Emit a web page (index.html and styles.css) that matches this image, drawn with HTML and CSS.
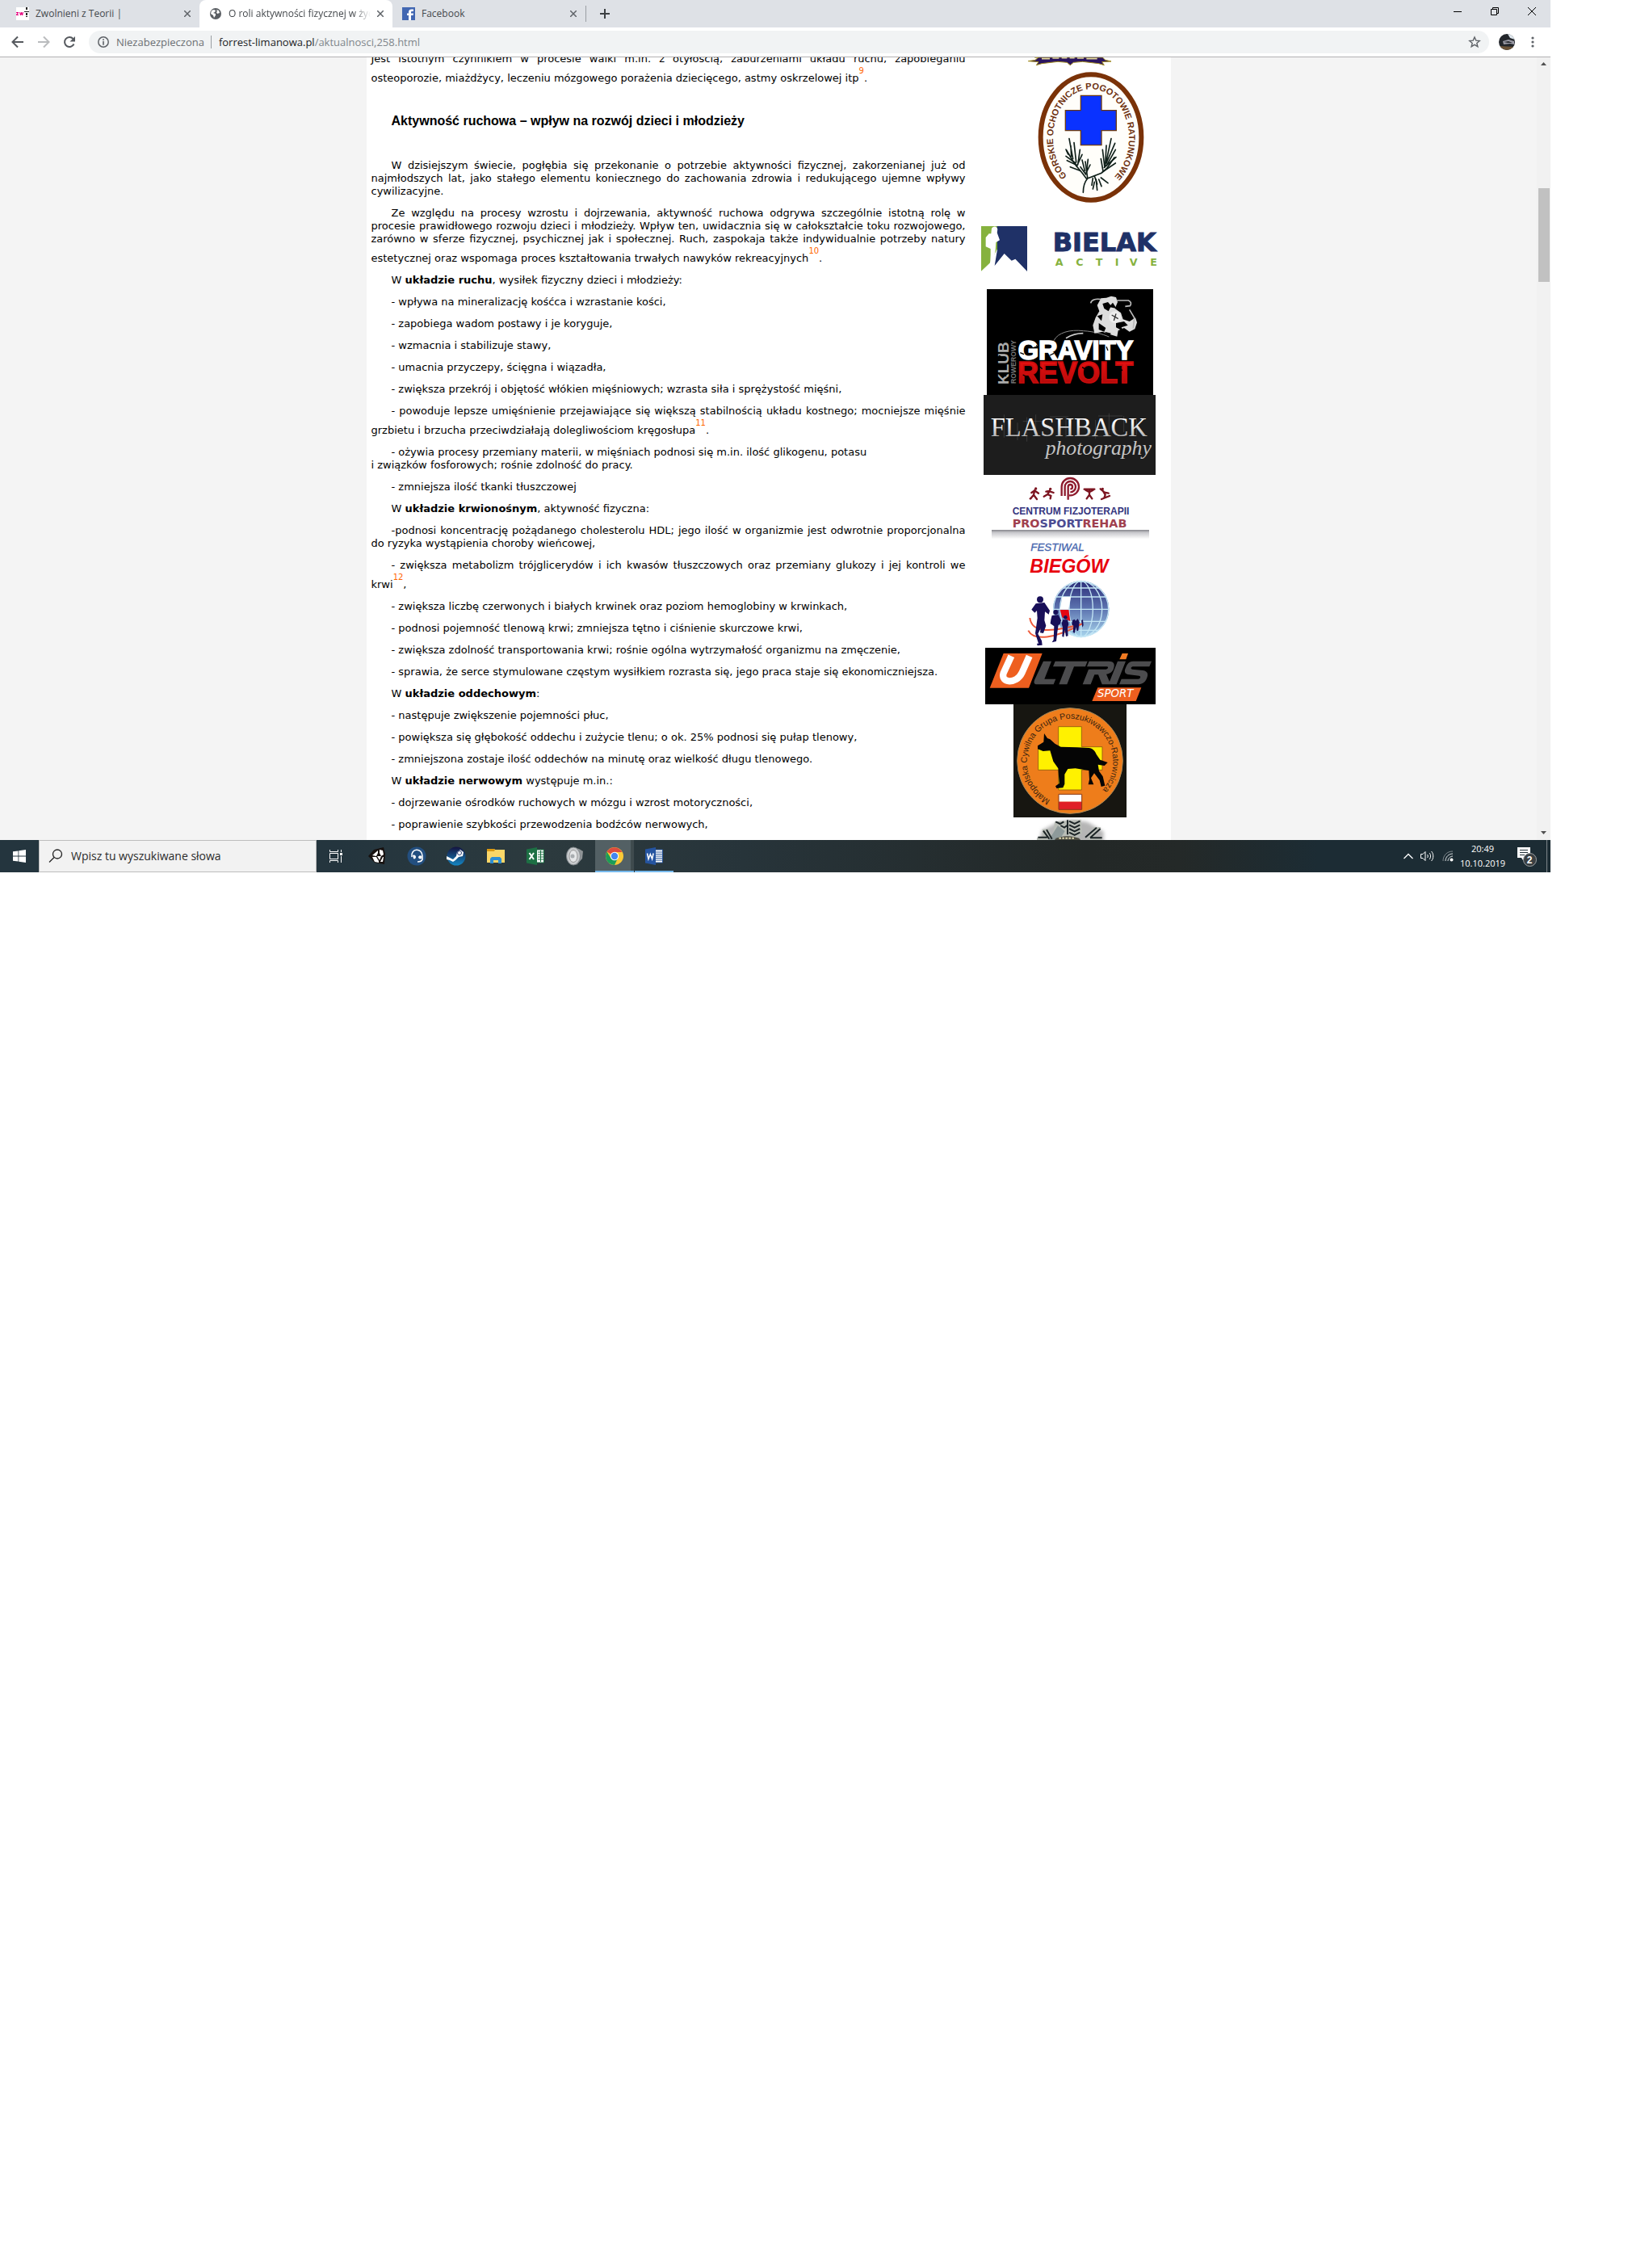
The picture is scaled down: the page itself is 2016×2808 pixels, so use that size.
FILE: index.html
```html
<!DOCTYPE html>
<html lang="pl">
<head>
<meta charset="utf-8">
<title>O roli aktywności fizycznej w życiu</title>
<link rel="stylesheet" href="styles.css">
</head>
<body>
<div class="desktop">
  <header class="tabstrip">
    <div class="tab">
      <svg class="fav" viewBox="0 0 16 16"><rect width="16" height="16" fill="#fff"/><path d="M0 6h3v1L1.500 9H3v1H0V9l1.500-2H0zM4 6h1l.5 2L6 6h1l.5 2L8 6h1l-.8 4H7l-.5-1.500L6 10H5z" fill="#e6007e"/><path d="M12 0h2v3h-2zM10 5h6v1h-6zM12 7h2v3h-2zM12 11h2v1h-2z" fill="#222"/></svg>
      <span class="tab-title">Zwolnieni z Teorii |</span>
      <button class="icon-btn" aria-label="Zamknij kartę"><svg width="8" height="8" viewBox="0 0 8 8"><path d="M0 0l8 8M8 0L0 8" stroke="#5f6368" stroke-width="1.500"/></svg></button>
    </div>
    <div class="tab active">
      <svg class="fav" viewBox="0 0 16 16"><circle cx="8" cy="8" r="7" fill="#5a5e63"/><path d="M3 4l3-1 2 1-1 2-2 1 3 1v2l-2 3-1-3-3-2zM9 3l3 1 1 3-3 1-1-2 1-1z" fill="#fff"/></svg>
      <span class="tab-title">O roli aktywności fizycznej w życiu</span>
      <button class="icon-btn" aria-label="Zamknij kartę"><svg width="8" height="8" viewBox="0 0 8 8"><path d="M0 0l8 8M8 0L0 8" stroke="#5f6368" stroke-width="1.500"/></svg></button>
    </div>
    <div class="tab">
      <svg class="fav" viewBox="0 0 16 16"><rect width="16" height="16" fill="#4267b2"/><path d="M8 16V10H6V7.500h2V6c0-2.500 1.500-3.500 3.500-3.500H14V5h-1.500C11.500 5 11 5.300 11 6v1.500h3L13.500 10H11v6z" fill="#fff"/></svg>
      <span class="tab-title">Facebook</span>
      <button class="icon-btn" aria-label="Zamknij kartę"><svg width="8" height="8" viewBox="0 0 8 8"><path d="M0 0l8 8M8 0L0 8" stroke="#5f6368" stroke-width="1.500"/></svg></button>
    </div>
    <button class="icon-btn new-tab" aria-label="Nowa karta"><svg width="12" height="12" viewBox="0 0 12 12"><path d="M6 0v12M0 6h12" stroke="#3c4043" stroke-width="2"/></svg></button>
    <div class="window-controls">
      <button class="icon-btn" aria-label="Minimalizuj"><svg width="10" height="10" viewBox="0 0 10 10"><path d="M0 5.500h10" stroke="#000"/></svg></button>
      <button class="icon-btn" aria-label="Przywróć"><svg width="10" height="10" viewBox="0 0 10 10"><path d="M.5 2.500h7v7h-7zM2.500 2V.5h7v7H8" fill="none" stroke="#000"/></svg></button>
      <button class="icon-btn" aria-label="Zamknij"><svg width="10" height="10" viewBox="0 0 10 10"><path d="M0 0l10 10M10 0L0 10" stroke="#000"/></svg></button>
    </div>
  </header>

  <nav class="toolbar">
    <button class="icon-btn" aria-label="Wstecz"><svg width="16" height="16" viewBox="0 0 16 16"><path d="M15 8H2M8 1.500L1.500 8 8 14.500" fill="none" stroke="#55595e" stroke-width="2"/></svg></button>
    <button class="icon-btn" aria-label="Dalej"><svg width="16" height="16" viewBox="0 0 16 16"><path d="M1 8h13M8 1.500L14.500 8 8 14.500" fill="none" stroke="#babcbe" stroke-width="2"/></svg></button>
    <button class="icon-btn" aria-label="Odśwież"><svg width="16" height="16" viewBox="0 0 16 16"><path d="M13.500 10.500A6 6 0 1 1 12.500 4" fill="none" stroke="#55595e" stroke-width="2"/><path d="M15 1v6.500H8.500z" fill="#55595e"/></svg></button>
    <div class="omnibox">
      <svg width="14" height="14" viewBox="0 0 14 14"><circle cx="7" cy="7" r="6.200" fill="none" stroke="#5f6368" stroke-width="1.500"/><path d="M6.200 3.300h1.600v1.600H6.200zM6.200 6h1.600v4.700H6.200z" fill="#5f6368"/></svg>
      <span class="security">Niezabezpieczona</span>
      <a class="url" href="#">forrest-limanowa.pl<span>/aktualnosci,258.html</span></a>
      <button class="icon-btn star" aria-label="Dodaj do zakładek"><svg width="16" height="16" viewBox="0 0 16 16"><path d="M8 2l1.800 4.100 4.400.4-3.400 2.900 1.100 4.300L8 11.400l-3.900 2.300 1.100-4.300L1.800 6.500l4.400-.4z" fill="none" stroke="#5f6368" stroke-width="1.400"/></svg></button>
    </div>
    <svg class="avatar" viewBox="0 0 20 20"><defs><clipPath id="av"><circle cx="10" cy="10" r="10"/></clipPath></defs><g clip-path="url(#av)"><rect width="20" height="20" fill="#23262b"/><path d="M11 0h9v7l-6-2z" fill="#dfe7ee"/><path d="M5 9l7-2 7 2v4l-5-1-8 1z" fill="#9b9ba6"/><path d="M6 10l6-1 5 2-6 0z" fill="#23262b"/><path d="M0 15l20 1v4H0z" fill="#6a5236"/></g></svg>
    <button class="icon-btn menu" aria-label="Menu"><svg width="4" height="14" viewBox="0 0 4 14"><g fill="#5f6368"><circle cx="2" cy="2" r="1.600"/><circle cx="2" cy="7" r="1.600"/><circle cx="2" cy="12" r="1.600"/></g></svg></button>
  </nav>

  <div class="viewport">
    <div class="site">
      <main class="page">
        <article class="article">
          <p class="continued">Jest istotnym czynnikiem w procesie walki m.in. z otyłością, zaburzeniami układu ruchu, zapobieganiu osteoporozie, miażdżycy, leczeniu mózgowego porażenia dziecięcego, astmy oskrzelowej itp<a class="note" href="#">9</a>.</p>
          <h2>Aktywność ruchowa – wpływ na rozwój dzieci i młodzieży</h2>
          <p>W dzisiejszym świecie, pogłębia się przekonanie o potrzebie aktywności fizycznej, zakorzenianej już od najmłodszych lat, jako stałego elementu koniecznego do zachowania zdrowia i redukującego ujemne wpływy cywilizacyjne.</p>
          <p>Ze względu na procesy wzrostu i dojrzewania, aktywność ruchowa odgrywa szczególnie istotną rolę w procesie prawidłowego rozwoju dzieci i młodzieży. Wpływ ten, uwidacznia się w całokształcie toku rozwojowego, zarówno w sferze fizycznej, psychicznej jak i społecznej. Ruch, zaspokaja także indywidualnie potrzeby natury estetycznej oraz wspomaga proces kształtowania trwałych nawyków rekreacyjnych<a class="note" href="#">10</a>.</p>
          <p>W <strong>układzie ruchu</strong>, wysiłek fizyczny dzieci i młodzieży:</p>
          <p>- wpływa na mineralizację kośćca i wzrastanie kości,</p>
          <p>- zapobiega wadom postawy i je koryguje,</p>
          <p>- wzmacnia i stabilizuje stawy,</p>
          <p>- umacnia przyczepy, ścięgna i wiązadła,</p>
          <p>- zwiększa przekrój i objętość włókien mięśniowych; wzrasta siła i sprężystość mięśni,</p>
          <p>- powoduje lepsze umięśnienie przejawiające się większą stabilnością układu kostnego; mocniejsze mięśnie grzbietu i brzucha przeciwdziałają dolegliwościom kręgosłupa<a class="note" href="#">11</a>.</p>
          <p>- ożywia procesy przemiany materii, w mięśniach podnosi się m.in. ilość glikogenu, potasu<br>i związków fosforowych; rośnie zdolność do pracy.</p>
          <p>- zmniejsza ilość tkanki tłuszczowej</p>
          <p>W <strong>układzie krwionośnym</strong>, aktywność fizyczna:</p>
          <p>-podnosi koncentrację pożądanego cholesterolu HDL; jego ilość w organizmie jest odwrotnie proporcjonalna do ryzyka wystąpienia choroby wieńcowej,</p>
          <p>- zwiększa metabolizm trójglicerydów i ich kwasów tłuszczowych oraz przemiany glukozy i jej kontroli we krwi<a class="note" href="#">12</a>,</p>
          <p>- zwiększa liczbę czerwonych i białych krwinek oraz poziom hemoglobiny w krwinkach,</p>
          <p>- podnosi pojemność tlenową krwi; zmniejsza tętno i ciśnienie skurczowe krwi,</p>
          <p>- zwiększa zdolność transportowania krwi; rośnie ogólna wytrzymałość organizmu na zmęczenie,</p>
          <p>- sprawia, że serce stymulowane częstym wysiłkiem rozrasta się, jego praca staje się ekonomiczniejsza.</p>
          <p>W <strong>układzie oddechowym</strong>:</p>
          <p>- następuje zwiększenie pojemności płuc,</p>
          <p>- powiększa się głębokość oddechu i zużycie tlenu; o ok. 25% podnosi się pułap tlenowy,</p>
          <p>- zmniejszona zostaje ilość oddechów na minutę oraz wielkość długu tlenowego.</p>
          <p>W <strong>układzie nerwowym</strong> występuje m.in.:</p>
          <p>- dojrzewanie ośrodków ruchowych w mózgu i wzrost motoryczności,</p>
          <p>- poprawienie szybkości przewodzenia bodźców nerwowych,</p>
        </article>

        <aside class="partners">
          <!-- ribbon of a club crest -->
          <svg viewBox="0 33 750 33"><path d="M244 33h14l-12 10-26 4 38 3-8 12 20-6 60-7 34 3 12 10 12-10 34-3 60 7 20 6-8-12 34-2-22-5-10-10z" fill="#2b1560" stroke="#a08a1c" stroke-width="3"/><path d="M270 38h30M310 36h24M344 35h20M374 35h18M402 36h24M436 38h40" stroke="#e6dca0" stroke-width="5"/></svg>
          <!-- GOPR -->
          <svg viewBox="0 66 750 549">
            <ellipse cx="453" cy="330" rx="187" ry="233" fill="#fffefa" stroke="#7a3208" stroke-width="18"/>
            <path id="gopr-arc" d="M364 474A141 182 0 1 1 542 474" fill="none"/>
            <text class="gopr-text"><textPath href="#gopr-arc">GORSKIE OCHOTNICZE POGOTOWIE RATUNKOWE</textPath></text>
            <path d="M415 175h77v55h55v75h-55v54h-77v-54h-57v-75h57z" fill="#0a32ff" stroke="#6b3a12" stroke-width="4"/>
            <g fill="none" stroke="#10201a" stroke-linecap="round">
              <path d="M424 535c0-25 6-40 16-52l52-20 20-18 28-40M438 486l-18-24-28-34-30-50M466 474l10 30M440 480l-8-60" stroke-width="5"/>
              <path d="M360 375l8 18M378 362l2 38M372 335l14 75M390 350l8 72M412 376l-8 56M360 400l36 26M364 416l38 18M420 394l-20 44M376 440l36 14M528 335l-18 84M542 352l-32 74M544 376l-34 60M546 404l-44 38M510 360l-4 76M496 376l8 66M490 410l8 46M544 426l-50 34M420 414l10 40M442 412l-6 50M450 432l-16 32M414 440l20 28M460 482l-4 26M472 486l4 40M482 486l10 26M490 480l26 20M466 496l-6 26" stroke-width="5"/>
            </g>
          </svg>
          <!-- Bielak Active -->
          <svg viewBox="0 615 750 279">
            <path d="M45 660h60v85l-28 52-32 30z" fill="#86b23e"/>
            <path d="M104 660h112v168l-44-46-14 6-27-26-36 45 10-60z" fill="#1f3167"/>
            <path d="M84 668c8-10 20-8 22 4l-2 12 10 28-14 8-2 30-6 30-2 8-12 18 2-40 0-22-18-8 0-34 12-14 8 0z" fill="#fff"/>
            <text class="bielak" x="311" y="752">BIELAK</text>
            <text class="active-word" y="808" x="320 397 470 542 596 673">ACTIVE</text>
          </svg>
          <!-- Gravity Revolt -->
          <svg viewBox="0 54 750 393">
            <defs><linearGradient id="rev" x1="0" y1="0" x2="0" y2="1"><stop offset="0" stop-color="#f21212"/><stop offset="1" stop-color="#a50808"/></linearGradient></defs>
            <rect x="66" y="54" width="618" height="393" fill="#000"/>
            <path d="M315 245c15-30 60-42 110-36 40 2 70 12 95 22" fill="none" stroke="#8a8a8a" stroke-width="3"/>
            <path d="M360 236c20-12 44-18 64-18" fill="none" stroke="#ccc" stroke-width="5"/>
            <path d="M490 88l20-2 18-6 18 4 6 18-10 24 22 16 8 24 24 8 22-14 6 18-8 24-20 10-20-14-22 10-4 22-34-10-20-8-30 6-6-30 10-28 14-24-8-22z" fill="#ddd"/>
            <path d="M490 92c-20-4-36 2-38 14M548 96l44 0c10 4 12 12 6 20l-18 2M596 130l18 30-4 40" fill="none" stroke="#bbb" stroke-width="5"/>
            <path d="M496 108l20-6 12 14-10 20-16-10zM546 180l30-6 14 14-24 8 10 16-30-16zM482 180l26 18-6 14-20-8zM520 120l14-16 14 22zM476 154l20-6-4 24zM504 212l24 6-10 10z" fill="#000"/>
            <circle cx="542" cy="158" r="22" fill="#eee"/><path d="M530 150l24 14M546 145l-8 26" stroke="#333" stroke-width="4"/>
            <text class="gravity" x="182" y="314">GRAVITY</text>
            <text class="revolt" x="180" y="403" fill="url(#rev)">REVOLT</text>
            <text class="klub" transform="translate(146 408) rotate(-90)">KLUB</text>
            <text class="rowerowy" transform="translate(173 405) rotate(-90)">ROWEROWY</text>
            <path d="M190 290l14 6M250 262l10 12M300 300l16-8M360 268l8 16M440 300l14-10M510 268l6 14M590 296l10 6M200 372l16 8M260 340l12 10M330 390l10-12M420 344l14 8M480 384l12 6M560 350l10 6M110 300l12 6M130 370l8 8" stroke="#000" stroke-width="4"/>
          </svg>
          <!-- Flashback photography -->
          <svg viewBox="0 447 750 297">
            <defs><linearGradient id="silver" x1="0" y1="0" x2="0" y2="1"><stop offset="0.300" stop-color="#fff"/><stop offset="1" stop-color="#999"/></linearGradient></defs>
            <rect x="54" y="447" width="639" height="297" fill="#1d1d1d"/>
            <path d="M130 520v85M180 550v65M215 530v90M248 520v80M300 528h70M360 530v75M470 540v70M520 515v80M575 525v60M622 535v60M200 545h80M480 525h90M440 600h90" stroke="#4a4a4a" stroke-width="2"/>
            <text class="flashback" x="80" y="600" fill="url(#silver)">FLASHBACK</text>
            <text class="photography" x="284" y="670">photography</text>
          </svg>
          <!-- Prosportrehab -->
          <svg viewBox="0 744 750 204">
            <g fill="none" stroke="#8e1b2d" stroke-width="7"><path d="M344 822v-34a32 32 0 1 1 32 32h-4"/><path d="M356 822v-34a20 20 0 1 1 20 20"/><path d="M368 836v-48a8 8 0 1 1 8 8"/></g>
            <g fill="none" stroke="#7c1420" stroke-width="7" stroke-linecap="round"><path d="M244 800l-4 18 12 16M240 818l-10 12M246 804l12 8M244 802l-12 8M300 802l-8 14 12 6-2 10M292 816l-14 8M298 804l-12 2M302 806l12 4M447 806v12l-10 14M447 818l10 14M447 808l-14-8M447 808l14-8M428 797h38M498 804l8 14-4 12M500 808l18 4M488 796l12 10M492 834l30-12"/></g>
            <g fill="#7c1420"><circle cx="248" cy="795" r="5"/><circle cx="302" cy="796" r="5"/><circle cx="447" cy="800" r="5"/><circle cx="496" cy="796" r="5"/><circle cx="228" cy="832" r="4"/></g>
            <text class="centrum" x="161" y="890">CENTRUM FIZJOTERAPII</text>
            <text class="prosport" x="161" y="938"><tspan>PRO</tspan><tspan class="blue">SPORT</tspan><tspan>REHAB</tspan></text>
          </svg>
          <!-- Festiwal Biegów -->
          <svg viewBox="0 18 750 438">
            <defs>
              <linearGradient id="fade" x1="0" y1="0" x2="0" y2="1"><stop offset="0" stop-color="#85858b"/><stop offset="0.300" stop-color="#c8c8cc"/><stop offset="1" stop-color="#fff"/></linearGradient>
              <linearGradient id="globe" x1="0" y1="0" x2="0" y2="1"><stop offset="0" stop-color="#2b2d78"/><stop offset="0.500" stop-color="#5d74b0"/><stop offset="1" stop-color="#a9d6ee"/></linearGradient>
            </defs>
            <rect x="84" y="18" width="585" height="34" fill="url(#fade)"/>
            <text class="festiwal" x="229" y="95">FESTIWAL</text>
            <text class="biegow" x="226" y="178">BIEGÓW</text>
            <circle cx="416" cy="312" r="104" fill="url(#globe)"/>
            <g fill="none" stroke="#c4e6f5" stroke-width="4"><circle cx="416" cy="312" r="102"/><path d="M416 208v208M312 313h208M324 267h184M324 358h184M350 234h132M350 391h132"/><ellipse cx="416" cy="312" rx="44" ry="104"/><ellipse cx="416" cy="312" rx="78" ry="104"/></g>
            <path d="M346 267h32l-8 46h-32z" fill="#fff"/><path d="M338 315h32l6 42-30-14z" fill="#e30613"/>
            <path d="M226 345c6 50 60 60 196 22M220 392c20 40 100 30 198-24" fill="none" stroke="#ee5a3a" stroke-width="6"/>
            <g fill="#180f58"><circle cx="264" cy="277" r="12"/><path d="M248 292l32-4 20 30-4 14-14-10-2 32 6 20-10 28-12-2 2-16-10 20 14 26 2 16-18 2-2-8 6 0-12-38 8-56-2-28-8 8-12-12z"/><circle cx="322" cy="324" r="9"/><path d="M308 336l24-2 10 20-4 14-6 4-4 26-4 34-16 4 6-10 2-50-14-10 2-14z"/><circle cx="358" cy="343" r="7"/><path d="M348 352l18 0 4 16-4 14 2 30-8 2-4-24-4 26-6-2 2-34-4-14z"/><path d="M384 354l8-4 4 6 8-8 6 12-4 32-6 2-2-16-6 24-6-4 2-24-6-4zM417 354l6-2 2 20-4 8z"/></g>
          </svg>
          <!-- Ultris Sport -->
          <svg viewBox="0 456 750 210">
            <rect x="60" y="456" width="633" height="210" fill="#000"/>
            <path d="M128 477h144l-50 128H77z" fill="#ee5f1f"/>
            <path d="M157 487L128 550C116 588 176 592 196 550L224 487" fill="none" stroke="#fff" stroke-width="25"/>
            <path d="M276 506h30l-26 66h42l-8 20h-62c-12 0-12-8-8-18zM320 506h120l-8 20h-42l-26 66h-30l26-66h-48zM446 506h72c24 0 24 14 18 30-6 12-14 16-26 18l16 38h-32l-14-36h-14l-14 36h-30l22-56h64c8 0 12-10 4-10h-74zM552 506h30l-34 86h-30zM606 506h72l-8 20h-60c-8 0-12 8-4 10l40 4c20 4 20 16 14 30-6 16-20 22-36 22h-66l8-20h62c8 0 12-10 4-12l-36-4c-20-2-20-14-14-26 6-16 14-24 28-24z" fill="#4c4c4e"/>
            <path d="M569 477h22l-8 22h-24z" fill="#f07a22"/>
            <path d="M478 604h162l-20 50H457z" fill="#ee5f1f"/>
            <text class="sport" x="477" y="639">SPORT</text>
          </svg>
          <!-- rescue dog group -->
          <svg viewBox="0 666 750 420">
            <rect x="165" y="666" width="420" height="420" fill="#171611"/>
            <circle cx="375" cy="876" r="196" fill="#ee7d1b" stroke="#a98a5a" stroke-width="3"/>
            <path id="dog-arc" d="M302 1022A160 160 0 1 1 448 1022" fill="none"/>
            <text class="dog-text"><textPath href="#dog-arc">Małopolska Cywilna Grupa Poszukiwawczo-Ratownicza</textPath></text>
            <path d="M332 749h86v75h77v86h-77v74h-86v-74h-75v-86h75z" fill="#fff100" stroke="#a0640e" stroke-width="3"/>
            <path d="M279 774l12 18 10 4 18 16 22 12 60 2 44 2c14 2 22 10 28 24l14 20 28 10-12 12-24-4 4 24 14 20 8 34-14 4-6-24-20-26-12 18 10 24-20 0 4-18-2-34-50-8-28 2-12 20 0 36-6 14-24 2-4-8 14-10-4-56-18-26-12-40-26 2-20-8 0-12 22-14z" fill="#050505"/>
            <path d="M333 1000h86v28h-86z" fill="#fff"/><path d="M333 1028h86v29h-86z" fill="#e01f26"/><path d="M333 1000h86v57h-86z" fill="none" stroke="#8a3a18" stroke-width="3"/>
          </svg>
          <!-- police badge -->
          <svg viewBox="0 1086 750 84">
            <defs><filter id="soft"><feGaussianBlur stdDeviation="7"/></filter></defs>
            <path d="M270 1135l60-32 50-8 60 8 60 36v40H260z" fill="#b5b5b5" filter="url(#soft)"/>
            <path d="M318 1102l98-8 4 50-30 26h-80zM272 1130l24-2 20 42h-40zM252 1162h40v8h-40zM462 1122l28 0-30 48h-20zM450 1158l42 4v8h-42z" fill="#b9bdb6"/>
            <path d="M330 1117l26 20-20 33h-40z" fill="#8e9a9a"/>
            <g fill="none" stroke="#1c2426" stroke-width="6"><path d="M322 1102l16 8 14-8M340 1116l14 8 10-8M372 1100l20 10 20-10M372 1114l20 10 20-10M372 1128l20 10 20-10M372 1142l20 10 20-10M366 1096v54M276 1136l22 30M288 1132l20 34M256 1160h34M488 1128l-38 34M474 1124l-42 36M450 1162h44"/></g>
            <path d="M320 1166c20-14 70-14 92 0l4 10H316z" fill="#4a4a40"/><path d="M334 1163h60" stroke="#ddd6ae" stroke-width="6" stroke-dasharray="8 4"/>
          </svg>
        </aside>
      </main>
    </div>
    <div class="scrollbar">
      <svg width="17" height="17" viewBox="0 0 17 17"><path d="M5 10l3.500-4 3.500 4z" fill="#505050"/></svg>
      <div class="track"><div class="thumb"></div></div>
      <svg width="17" height="17" viewBox="0 0 17 17"><path d="M5 6l3.500 4L12 6z" fill="#505050"/></svg>
    </div>
  </div>

  <footer class="taskbar">
    <button class="icon-btn start" aria-label="Start"><svg width="16" height="16" viewBox="0 0 16 16"><path d="M0 2.300L6.500 1.400V7.600H0zM7.300 1.300L16 0v7.600H7.300zM0 8.400h6.500v6.200L0 13.700zM7.300 8.400H16V16l-8.700-1.300z" fill="#fff"/></svg></button>
    <label class="search">
      <svg width="18" height="18" viewBox="0 0 18 18"><circle cx="11" cy="6.500" r="5.500" fill="none" stroke="#222" stroke-width="1.300"/><path d="M7 10.500L1 16.500" stroke="#222" stroke-width="1.300"/></svg>
      <input type="text" placeholder="Wpisz tu wyszukiwane słowa" aria-label="Wyszukaj">
    </label>
    <button class="icon-btn app" aria-label="Widok zadań"><svg width="16" height="16" viewBox="0 0 16 16"><path d="M.5 0v2.500h10V0M.5 16v-2.500h10V16M.5 4.500h10v7H.5zM14.500 0v3M14.500 8v8" fill="none" stroke="#fff"/><path d="M13 4h3v3h-3z" fill="#fff"/></svg></button>
    <div class="apps">
      <button class="icon-btn app" aria-label="Unity"><svg width="22" height="22" viewBox="0 0 22 22"><path d="M0 11L7 3 19 0l2 8-1 13-12-2z" fill="#17110f"/><path d="M5 10l7-6 0 3-2 4zM14 3l4 1 1 5-3 2-2-4zM5 12h5l3 5 0 2-5-1zM11 11h5l-2 5zM18 12l1 0-1 6-3 0z" fill="#fff"/></svg></button>
      <button class="icon-btn app" aria-label="TeamSpeak"><svg width="24" height="24" viewBox="0 0 24 24"><circle cx="12" cy="12" r="11.500" fill="#234f80"/><path d="M6 13C4 2 19 1 19 12v4c-1 3-4 3-6 3" fill="none" stroke="#fff" stroke-width="1.600"/><path d="M7 11c2-1 4 0 4 2s-2 3-3 2zM14 13c1-2 3-2 4-1v3c-2 1-4 0-4-2z" fill="#fff"/></svg></button>
      <button class="icon-btn app" aria-label="Steam"><svg width="24" height="24" viewBox="0 0 24 24"><defs><linearGradient id="stm" x1="0" y1="0" x2="0" y2="1"><stop offset="0" stop-color="#15133f"/><stop offset="1" stop-color="#1486c2"/></linearGradient></defs><circle cx="12" cy="12" r="11.500" fill="url(#stm)"/><path d="M0 12l8 4 4-4 1-5 4-3 4 3-1 5-5 1-4 4-3 2-4-2-4-1z" fill="#fff"/><circle cx="16" cy="8" r="2.500" fill="#fff" stroke="#2b3d73"/></svg></button>
      <button class="icon-btn app" aria-label="Eksplorator plików"><svg width="22" height="18" viewBox="0 0 22 18"><path d="M0 0h9l1 1h12v16H0z" fill="#fbd768"/><path d="M0 0h9l1 1-1 2H0z" fill="#dc9a12"/><path d="M4 18v-6l2-2h10l2 2v6h-4v-4H8v4z" fill="#2f8fd4"/></svg></button>
      <button class="icon-btn app" aria-label="Excel"><svg width="22" height="22" viewBox="0 0 22 22"><path d="M12 3h9.500v16H12z" fill="#fff" stroke="#1d7044"/><path d="M14 6h7M14 9h7M14 12h7M14 15h7M17.500 4v14" stroke="#1d7044"/><path d="M0 2.500L13 0v22L0 19.500z" fill="#1d7044"/><path d="M3.500 7L9 15M9 7l-5.500 8" stroke="#fff" stroke-width="2"/></svg></button>
      <button class="icon-btn app" aria-label="Dźwięk"><svg width="22" height="24" viewBox="0 0 22 24"><path d="M8 1l8 2 5 3-1 9-7 8z" fill="#8f9496"/><ellipse cx="9" cy="12" rx="8.500" ry="11" fill="#c7cacc" stroke="#80868a"/><ellipse cx="9" cy="12" rx="5" ry="7.500" fill="#e6e8e9" stroke="#999"/><circle cx="8" cy="12" r="2.500" fill="#a8adb0"/></svg></button>
      <button class="icon-btn app running current" aria-label="Chrome"><svg width="22" height="22" viewBox="0 0 22 22"><circle cx="11" cy="11" r="11" fill="#fbc936"/><path d="M11 11L1.500 5.500A11 11 0 0 1 20.500 6H11z" fill="#dd4b3e"/><path d="M1.500 5.500A11 11 0 0 0 11 22l4-8.500-8.500 0z" fill="#1b9c59"/><circle cx="11" cy="11" r="5.200" fill="#fff"/><circle cx="11" cy="11" r="4.200" fill="#4486f0"/></svg></button>
      <button class="icon-btn app running" aria-label="Word"><svg width="22" height="22" viewBox="0 0 22 22"><path d="M12 3h9.500v16H12z" fill="#fff" stroke="#2a5699"/><path d="M13 6h8M13 8.500h8M13 11h8M13 13.500h8M13 16h8" stroke="#2a5699"/><path d="M0 2.500L13 0v22L0 19.500z" fill="#2554a0"/><path d="M2.500 7.500l1.500 7 2.300-6 2.300 6 1.500-7" fill="none" stroke="#fff" stroke-width="1.500"/></svg></button>
    </div>
    <div class="tray">
      <button class="icon-btn" aria-label="Ukryte ikony"><svg width="12" height="8" viewBox="0 0 12 8"><path d="M.5 7L6 1.500 11.500 7" fill="none" stroke="#fff" stroke-width="1.300"/></svg></button>
      <button class="icon-btn" aria-label="Głośność"><svg width="18" height="14" viewBox="0 0 18 14"><path d="M.5 4.500H3l3-3v11l-3-3H.5z" fill="none" stroke="#fff"/><path d="M8.500 5c1 1 1 3 0 4M11 3c2 2 2 6 0 8M13.500 1c3 3 3 9 0 12" fill="none" stroke="#fff"/></svg></button>
      <button class="icon-btn" aria-label="Sieć"><svg width="14" height="14" viewBox="0 0 14 14"><path d="M1 13C1 6 6 1 13 1" fill="none" stroke="#7e878c"/><path d="M4 13c0-5 4-9 9-9M7 13c0-3 3-6 6-6" fill="none" stroke="#dfe3e5"/><circle cx="11.500" cy="11.500" r="2" fill="#fff"/></svg></button>
      <div class="clock"><time>20:49</time><span>10.10.2019</span></div>
      <button class="icon-btn notifications" aria-label="Powiadomienia"><svg width="24" height="26" viewBox="0 0 24 26"><path d="M0 2h16v13h-6l-3 3-2-3H0z" fill="#fff"/><path d="M3 5.500h10M3 8.500h10M3 11.500h6" stroke="#23323a"/><circle cx="15.500" cy="17.500" r="8" fill="#3a3f42" stroke="#9aa0a3"/><text class="badge" x="15" y="22">2</text></svg></button>
    </div>
  </footer>
</div>
</body>
</html>
```
FILE: styles.css
```css
* { box-sizing: border-box; }

body {
  margin: 0;
  background: #fff;
  font-family: "Open Sans", "Noto Sans", sans-serif;
}

.desktop {
  display: flex;
  flex-direction: column;
  max-width: 1920px;
  aspect-ratio: 16 / 9;
}

.icon-btn {
  display: flex;
  align-items: center;
  justify-content: center;
  padding: 0;
  border: 0;
  background: none;
}

/* Tab strip */
.tabstrip {
  display: flex;
  height: 34px;
  flex: none;
  padding-left: 8px;
  background: #dee1e6;
}

.tab {
  display: flex;
  align-items: center;
  gap: 8px;
  width: 239px;
  padding: 0 11px 0 12px;
}

.tab .fav {
  width: 16px;
  height: 16px;
  flex: none;
}

.tab-title {
  flex: 1;
  overflow: hidden;
  white-space: nowrap;
  font-size: 12px;
  line-height: 16px;
  color: #45494d;
}

.tab.active {
  border-radius: 8px 8px 0 0;
  background: #fff;
}

.tab.active .tab-title {
  mask-image: linear-gradient(90deg, #000 88%, transparent);
}

.new-tab {
  width: 46px;
  height: 20px;
  align-self: center;
  border-left: 1px solid #9a9ea3;
}

.window-controls {
  display: flex;
  height: 28px;
  margin-left: auto;
}

.window-controls .icon-btn { width: 46px; }

/* Toolbar */
.toolbar {
  display: flex;
  align-items: center;
  gap: 16px;
  height: 37px;
  flex: none;
  padding: 0 20px 0 14px;
  border-bottom: 1px solid #b2b1b3;
  background: #fff;
}

.omnibox {
  display: flex;
  flex: 1;
  align-items: center;
  height: 28px;
  margin-right: 6px;
  padding: 0 10px 0 11px;
  border-radius: 14px;
  background: #f1f3f4;
  font-size: 13px;
  line-height: 20px;
}

.security {
  margin-left: 9px;
  padding-right: 8px;
  border-right: 1px solid #9a9ea3;
  line-height: 16px;
  color: #6b6f73;
}

.url {
  margin-left: 9px;
  color: #202124;
  text-decoration: none;
}

.url span { color: #80868b; }

.star { margin-left: auto; }

.avatar {
  width: 20px;
  height: 20px;
  margin-left: -10px;
}

.menu { margin-left: 4px; }

/* Page area */
.viewport {
  display: flex;
  flex: 1;
  min-height: 0;
  overflow: hidden;
  background: #f4f4f4;
}

.site {
  display: flex;
  flex: 1;
  justify-content: center;
  min-width: 0;
}

.page {
  display: flex;
  flex: 1;
  justify-content: space-between;
  max-width: 996px;
  padding-left: 6px;
  background: #fff;
}

.article {
  width: 736px;
  margin-top: -6px;
  font-family: "DejaVu Sans", Verdana, sans-serif;
  font-size: 13px;
  line-height: 16px;
  color: #000;
  text-align: justify;
}

.article p {
  margin: 0 0 11px;
  text-indent: 25px;
}

.article .continued {
  margin-bottom: 36px;
  text-indent: 0;
}

.article h2 {
  margin: 0 0 38px;
  font-family: "Liberation Sans", Arial, sans-serif;
  font-size: 16px;
  line-height: 18px;
  text-align: left;
  text-indent: 25px;
}

.note {
  vertical-align: 10px;
  font-size: 10px;
  line-height: 14px;
  color: #f60;
  text-decoration: none;
}

.partners {
  display: flex;
  flex-direction: column;
  width: 250px;
}

.partners svg {
  display: block;
  width: 100%;
  flex: none;
}

.partners text {
  font-family: "Liberation Sans", Arial, sans-serif;
  font-weight: bold;
}

.partners .gopr-text { font-size: 33px; fill: #6e3212; }
.partners .bielak { font-family: "DejaVu Sans", sans-serif; font-size: 96px; fill: #1f3167; stroke: #1f3167; stroke-width: 3px; }
.partners .active-word { font-family: "DejaVu Sans", sans-serif; font-size: 38px; fill: #86b23e; }
.partners .gravity { font-size: 98px; fill: #fff; stroke: #fff; stroke-width: 5px; }
.partners .revolt { font-size: 108px; stroke: #c80c0c; stroke-width: 5px; }
.partners .klub { font-size: 57px; fill: #aaa; }
.partners .rowerowy { font-size: 26px; fill: #777; }
.partners .flashback { font-family: "Liberation Serif", serif; font-size: 98px; font-weight: normal; }
.partners .photography { font-family: "Liberation Serif", serif; font-size: 77px; font-style: italic; font-weight: normal; fill: #c4c4c4; }
.partners .centrum { font-size: 36px; fill: #34347e; }
.partners .prosport { font-family: "DejaVu Sans", sans-serif; font-size: 43px; fill: #a0404e; }
.partners .blue { fill: #4c4c92; }
.partners .festiwal { font-size: 40px; font-style: italic; font-weight: normal; fill: #4666ae; stroke: #4666ae; stroke-width: 1px; }
.partners .biegow { font-size: 70px; font-style: italic; fill: #e8000e; }
.partners .sport { font-family: "DejaVu Sans", sans-serif; font-size: 40px; font-style: italic; font-weight: normal; fill: #fff; }
.partners .dog-text { font-size: 32px; font-weight: normal; fill: #3a2410; }

/* Scrollbar */
.scrollbar {
  display: flex;
  flex-direction: column;
  width: 17px;
  background: #f1f1f1;
}

.track {
  flex: 1;
  padding: 145px 1px 0 2px;
}

.thumb {
  height: 116px;
  background: #c1c1c1;
}

/* Taskbar */
.taskbar {
  display: flex;
  height: 40px;
  flex: none;
  background: linear-gradient(90deg, #24353e 0%, #24353e 22%, #2c3a3e 35%, #27343a 48%, #232827 70%, #242928 76%, #1c2c34 85%, #1c2c34 100%);
}

.start { width: 48px; }

.search {
  display: flex;
  align-items: center;
  width: 344px;
  padding-left: 11px;
  border: 1px solid #bdbdbd;
  background: #f2f2f2;
}

.search input {
  flex: 1;
  min-width: 0;
  margin-left: 10px;
  padding: 0;
  border: 0;
  background: none;
  font-family: inherit;
  font-size: 14px;
  line-height: 20px;
}

.search input::placeholder { color: #2b2b2b; }

.app { width: 48px; }

.apps {
  display: flex;
  gap: 1px;
  margin-left: 3px;
}

.running {
  border-bottom: 2px solid #76b9ed;
  padding-top: 2px;
}

.current { background: linear-gradient(90deg, #536064 44px, #3f4b4e 44px); }

.tray {
  display: flex;
  align-items: center;
  gap: 9px;
  margin-left: auto;
  padding-right: 4px;
}

.clock {
  display: flex;
  flex-direction: column;
  align-items: center;
  width: 54px;
  font-size: 11px;
  line-height: 18px;
  color: #fff;
}

.notifications {
  height: 40px;
  margin-left: 7px;
  padding-right: 12px;
  border-right: 1px solid #7d868b;
}

.badge {
  font-size: 12px;
  font-weight: bold;
  text-anchor: middle;
  fill: #fff;
}
```
